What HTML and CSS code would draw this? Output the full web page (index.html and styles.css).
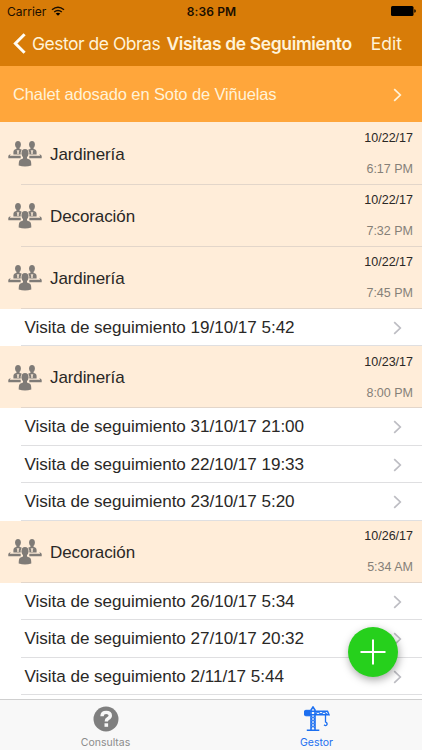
FILE: index.html
```
<!DOCTYPE html>
<html lang="es">
<head>
<meta charset="UTF-8" />
<meta name="viewport" content="width=device-width, initial-scale=1" />
<title>Visitas de Seguimiento</title>
<link rel="stylesheet" href="styles.css">
</head>
<body>

<!-- Shared icons -->
<svg class="sprite" aria-hidden="true">
  <symbol id="chevron" viewBox="0 0 9 14">
    <path d="M1.2 1.1 7.3 7l-6.1 5.9" fill="none" stroke="currentColor" stroke-width="1.7" />
  </symbol>
  <symbol id="meeting" viewBox="0 0 34 26">
    <ellipse cx="10" cy="3.6" rx="2.9" ry="3.5" />
    <ellipse cx="24" cy="3.6" rx="2.9" ry="3.5" />
    <path d="M8.5 6h3v1.8l2.300 1q1 .7 1 2.200v2.500H5.400V11q0-1.500 1-2.200l2.100-1z" />
    <path d="M22.500 6h3v1.800l2.100 1q1 .7 1 2.200v2.500h-9.400V11q0-1.500 1-2.200l2.300-1z" />
    <path class="collar" d="m9.200 9 .8 4 .8-4M23.200 9l.8 4 .8-4" />
    <path d="M2.600 12.800.3 14.800v2.400h33.400v-2.400l-2.300-2 .7 1.900H1.900z" />
    <path class="cut" d="M12.700 18v-6.500q.7-4 4.300-4t4.300 4V18z" />
    <ellipse cx="17" cy="12.200" rx="3.500" ry="4.200" />
    <path d="M15 15h4v2.600l3 1.200q1.300.8 1.300 5.600-6.300 2-12.600 0 0-4.800 1.300-5.600l3-1.200z" />
  </symbol>
</svg>

<div class="screen">
  <header class="top">
    <div class="status">
      <span class="carrier">Carrier
        <svg class="wifi" viewBox="0 0 14 10">
          <path d="M1 3.8q6-5 12 0M3.2 6q3.8-3.2 7.6 0" fill="none" stroke="#1a0e00" stroke-width="1.4" />
          <path d="M4.7 7.5q2.300-1.700 4.600 0L7 9.800z" />
        </svg>
      </span>
      <span class="clock">8:36 PM</span>
      <svg class="battery" viewBox="0 0 25 10">
        <rect width="22.5" height="10" rx="1.5" />
        <path d="M23.3 3.2q1.5.3 1.5 1.8t-1.5 1.8z" />
      </svg>
    </div>
    <nav class="navbar">
      <svg class="back" viewBox="0 0 13 21"><path d="M11.6 1.3 2.4 10.5l9.2 9.2" /></svg>
      <span class="back-label">Gestor de Obras</span>
      <h1>Visitas de Seguimiento</h1>
      <span class="edit">Edit</span>
    </nav>
  </header>

  <div class="project">
    <span>Chalet adosado en Soto de Viñuelas</span>
    <svg class="chevron"><use href="#chevron" /></svg>
  </div>

  <main class="list">
    <div class="category">
      <svg class="meeting"><use href="#meeting" /></svg>
      <span class="name">Jardinería</span>
      <div class="when"><span>10/22/17</span><span class="hour">6:17 PM</span></div>
    </div>
    <div class="category">
      <svg class="meeting"><use href="#meeting" /></svg>
      <span class="name">Decoración</span>
      <div class="when"><span>10/22/17</span><span class="hour">7:32 PM</span></div>
    </div>
    <div class="category">
      <svg class="meeting"><use href="#meeting" /></svg>
      <span class="name">Jardinería</span>
      <div class="when"><span>10/22/17</span><span class="hour">7:45 PM</span></div>
    </div>
    <div class="visit"><span>Visita de seguimiento 19/10/17 5:42</span><svg class="chevron"><use href="#chevron" /></svg></div>

    <div class="category">
      <svg class="meeting"><use href="#meeting" /></svg>
      <span class="name">Jardinería</span>
      <div class="when"><span>10/23/17</span><span class="hour">8:00 PM</span></div>
    </div>
    <div class="visit"><span>Visita de seguimiento 31/10/17 21:00</span><svg class="chevron"><use href="#chevron" /></svg></div>
    <div class="visit"><span>Visita de seguimiento 22/10/17 19:33</span><svg class="chevron"><use href="#chevron" /></svg></div>
    <div class="visit"><span>Visita de seguimiento 23/10/17 5:20</span><svg class="chevron"><use href="#chevron" /></svg></div>

    <div class="category">
      <svg class="meeting"><use href="#meeting" /></svg>
      <span class="name">Decoración</span>
      <div class="when"><span>10/26/17</span><span class="hour">5:34 AM</span></div>
    </div>
    <div class="visit"><span>Visita de seguimiento 26/10/17 5:34</span><svg class="chevron"><use href="#chevron" /></svg></div>
    <div class="visit"><span>Visita de seguimiento 27/10/17 20:32</span><svg class="chevron"><use href="#chevron" /></svg></div>
    <div class="visit"><span>Visita de seguimiento 2/11/17 5:44</span><svg class="chevron"><use href="#chevron" /></svg></div>
  </main>

  <!-- Floating add button -->
  <button class="add" aria-label="Añadir">
    <svg viewBox="0 0 26 26"><path d="M13 .5v25M.5 13h25" /></svg>
  </button>

  <footer class="tabs">
    <div class="tab">
      <svg class="help" viewBox="0 0 26 26">
        <circle cx="13" cy="13" r="12.5" fill="#7f7f7f" />
        <path d="M9 10.200q.1-3.800 4.200-3.800 4.100 0 4.100 3.200 0 1.900-2.200 3-1.800 1-1.800 3" fill="none" stroke="#f8f8f8" stroke-width="3.4" />
        <rect x="11.5" y="17.3" width="3.6" height="3.5" fill="#f8f8f8" />
      </svg>
      <span>Consultas</span>
    </div>
    <div class="tab active">
      <svg class="crane" viewBox="0 0 26 26">
        <path d="M7 24V4l2-3 2 3v20M2.800 24.300h12.500" stroke-width="1.6" />
        <path d="m7 10 4 3-4 3 4 3-4 3M11 10l-4 3 4 3-4 3 4 3" stroke-width="1" />
        <path d="M1 5.200h22.500l1.500 3.600H1z" stroke-width="1.5" />
        <path d="m11 8.500 3-3 3 3 3-3 3 3" stroke-width="1.1" />
        <path d="M1.500 4.300H6v5.500H1.500L.3 8.500v-3z" fill="currentColor" />
        <path d="M21.500 8.500v7.500q2 .8 1.500 2.700-1 1.600-3 .2" stroke-width="1.3" />
      </svg>
      <span>Gestor</span>
    </div>
  </footer>
</div>

</body>
</html>
```
FILE: styles.css
```
* {
  box-sizing: border-box;
}
body {
  margin: 0;
  background: #fff;
  color: #2a2826;
  font-family: "Liberation Sans", Arial, sans-serif;
}
.sprite {
  display: block;
  width: 0;
  height: 0;
}
.screen {
  position: relative;
  display: flex;
  flex-direction: column;
  width: 422px;
  height: 750px;
  overflow: hidden;
}
.top {
  height: 66px;
  background: #d87c08;
  font-family: Inter, sans-serif;
}
.status {
  display: grid;
  grid-template-columns: 1fr auto 1fr;
  align-items: center;
  height: 22px;
  padding: 0 6px 0 7px;
  color: #1a0e00;
  font-size: 12px;
}
.wifi {
  width: 14px;
  height: 10px;
  margin-left: 1px;
}
.clock {
  font-weight: 600;
  letter-spacing: .1px;
}
.battery {
  justify-self: end;
  width: 25px;
  height: 10px;
}
.navbar {
  display: flex;
  align-items: center;
  height: 43px;
  padding: 0 20px 0 13px;
  color: #fff3d8;
  font-size: 17.5px;
  white-space: nowrap;
}
.back {
  flex: none;
  width: 13px;
  height: 21px;
  fill: none;
  stroke: #fffdf5;
  stroke-width: 3;
}
.back-label {
  width: 140.5px;
  padding-left: 6px;
  letter-spacing: -.5px;
}
h1 {
  margin: 0;
  font-size: 17.5px;
  font-weight: 600;
  letter-spacing: -.38px;
}
.edit {
  margin-left: auto;
}
.project {
  display: flex;
  align-items: center;
  justify-content: space-between;
  height: 56px;
  padding: 1px 20px 0 13px;
  background: #ffa63b;
  color: #fff3d8;
  font-size: 16.5px;
  letter-spacing: -.12px;
}
.chevron {
  width: 9px;
  height: 14px;
}
.list {
  flex: 1;
  padding-top: .5px;
  background: linear-gradient(#ffedd9, #ffedd9) 0 0 / 100% 1px no-repeat;
}
.category {
  display: flex;
  align-items: center;
  height: 62px;
  padding: 0 9px 0 8px;
  background: linear-gradient(#e3d6ca, #e3d6ca) 21px 100% / 100% 1px no-repeat #ffedd9;
}
.meeting {
  width: 34px;
  height: 26px;
  margin-top: 1px;
  fill: #7f7b77;
}
.cut {
  fill: #ffedd9;
}
.collar {
  fill: none;
  stroke: #ffedd9;
  stroke-width: .8;
}
.name {
  margin: 2px auto 0 8px;
  font-size: 17px;
  letter-spacing: -.1px;
}
.when {
  display: flex;
  flex-direction: column;
  justify-content: space-between;
  height: 47px;
  text-align: right;
  font-size: 12.5px;
  line-height: 16px;
}
.hour {
  color: #858078;
}
.visit {
  display: flex;
  align-items: center;
  justify-content: space-between;
  height: 37.5px;
  margin-left: 21px;
  padding: 2px 20px 0 3.5px;
  border-bottom: 1px solid #dfdfe1;
  font-size: 17.1px;
  letter-spacing: -.04px;
}
.visit .chevron {
  color: #bdbdc3;
}
.add {
  position: absolute;
  left: 348px;
  top: 627px;
  display: flex;
  align-items: center;
  justify-content: center;
  width: 50px;
  height: 50px;
  border: 0;
  border-radius: 50%;
  background: #26d01c;
  box-shadow: 1px 3px 8px rgba(0, 0, 0, .35);
}
.add svg {
  flex: none;
  width: 26px;
  height: 26px;
  stroke: #fff;
  stroke-width: 2;
}
.tabs {
  display: flex;
  height: 51px;
  border-top: 1px solid #cfcfcf;
  background: #f8f8f8;
  font-family: Inter, sans-serif;
}
.tab {
  flex: 1;
  display: flex;
  flex-direction: column;
  align-items: center;
  padding-top: 6px;
  color: #8b8b8b;
  font-size: 10.5px;
  line-height: 14px;
}
.tab svg {
  width: 26px;
  height: 26px;
  margin-bottom: 4px;
}
.active {
  color: #1c6ff0;
}
.crane {
  fill: none;
  stroke: currentColor;
}
```
